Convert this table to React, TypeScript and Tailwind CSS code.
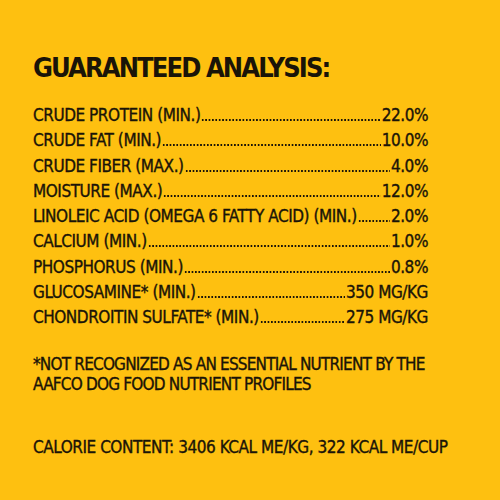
import React from 'react';

const rows: [string, string][] = [
  ['CRUDE PROTEIN (MIN.)', '22.0%'],
  ['CRUDE FAT (MIN.)', '10.0%'],
  ['CRUDE FIBER (MAX.)', '4.0%'],
  ['MOISTURE (MAX.)', '12.0%'],
  ['LINOLEIC ACID (OMEGA 6 FATTY ACID) (MIN.)', '2.0%'],
  ['CALCIUM (MIN.)', '1.0%'],
  ['PHOSPHORUS (MIN.)', '0.8%'],
  ['GLUCOSAMINE* (MIN.)', '350 MG/KG'],
  ['CHONDROITIN SULFATE* (MIN.)', '275 MG/KG'],
];

export default function App() {
  return (
    <div className="w-[500px] h-[500px] bg-[#fec010] text-[#1a1408] font-['DejaVu_Sans_Condensed','Liberation_Sans_Narrow',sans-serif] overflow-hidden">
      <div className="pl-[33px] pt-[52px] w-[428px]">
        {/* Title */}
        <h1 className="text-[27px] leading-[32px] font-bold tracking-[-1.9px] whitespace-nowrap">
          GUARANTEED ANALYSIS:
        </h1>

        {/* Analysis rows */}
        <div className="mt-[19px] text-[17px] leading-[25.25px] tracking-[-0.45px] [-webkit-text-stroke:0.35px_#1a1408]">
          {rows.map(([label, value]) => (
            <div key={label} className="flex items-baseline whitespace-nowrap">
              <span>{label}</span>
              <span className="flex-1 min-w-0 h-[2px] mx-[1px] bg-[radial-gradient(circle,#1a1408_0.8px,transparent_1.1px)] bg-[length:3.4px_2px] bg-repeat-x" />
              <span>{value}</span>
            </div>
          ))}
        </div>

        {/* Footnote */}
        <p className="mt-[24px] text-[17px] leading-[20px] tracking-[-0.8px] whitespace-nowrap [-webkit-text-stroke:0.35px_#1a1408]">
          *NOT RECOGNIZED AS AN ESSENTIAL NUTRIENT BY THE
          <br />
          AAFCO DOG FOOD NUTRIENT PROFILES
        </p>

        <p className="mt-[43px] text-[17px] leading-[20px] tracking-[-0.45px] whitespace-nowrap [-webkit-text-stroke:0.35px_#1a1408]">
          CALORIE CONTENT: 3406 KCAL ME/KG, 322 KCAL ME/CUP
        </p>
      </div>
    </div>
  );
}
